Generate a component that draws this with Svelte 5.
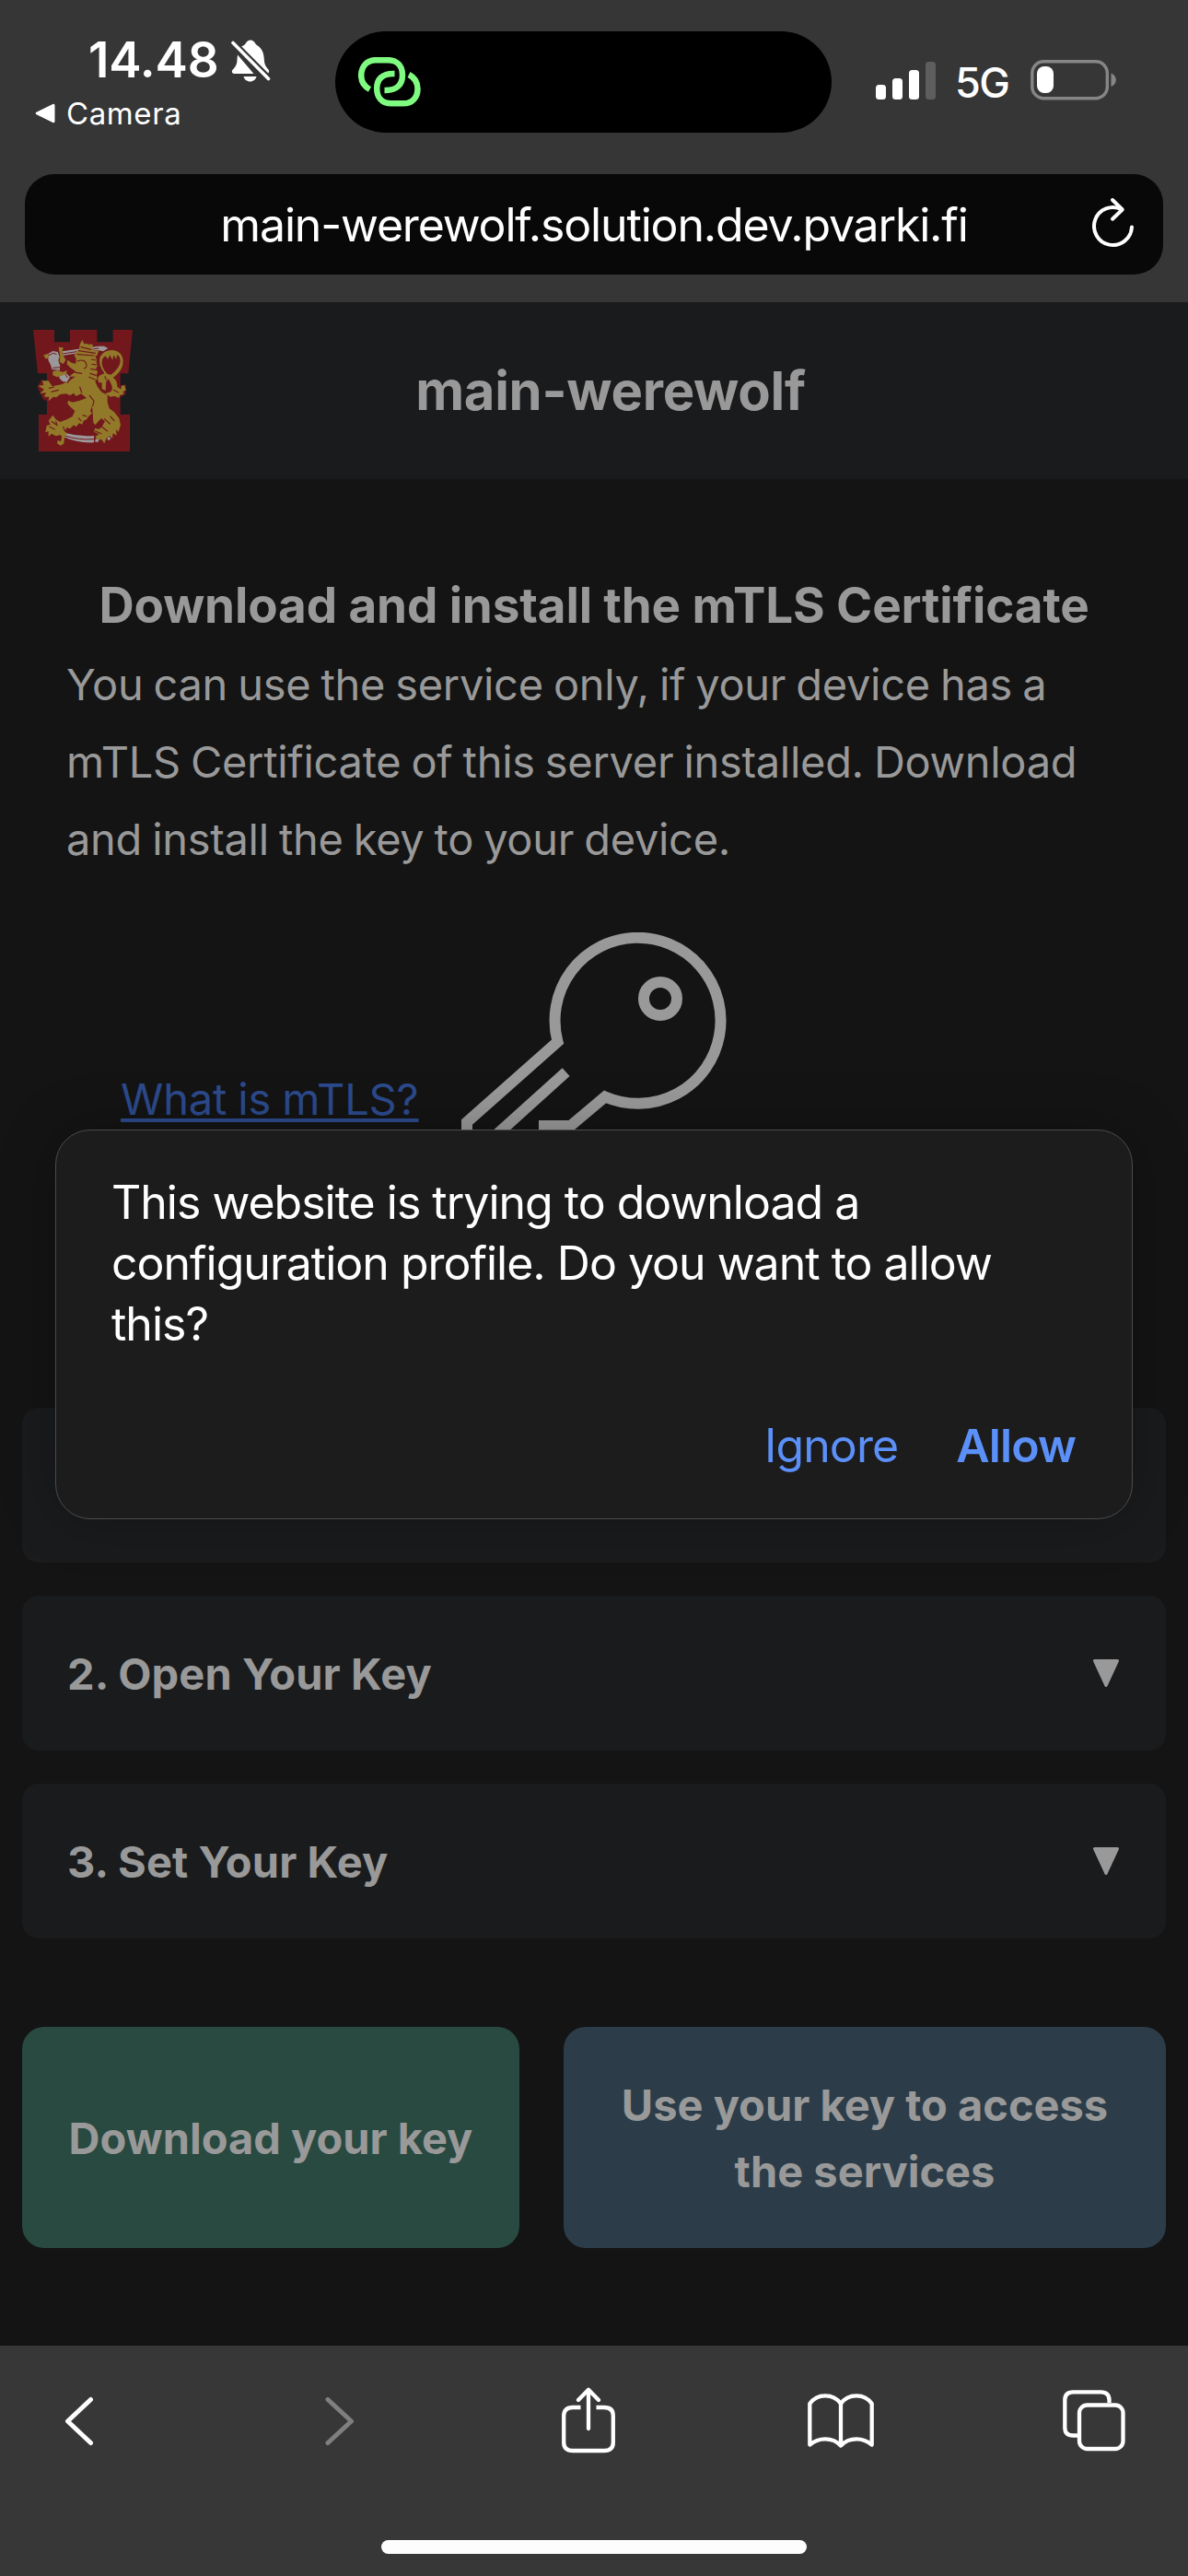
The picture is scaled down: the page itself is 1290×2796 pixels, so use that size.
<script>
  const steps = ['2. Open Your Key', '3. Set Your Key'];
</script>

<div class="screen">
  <header class="chrome">
    <div class="status">
      <div class="status-left">
        <div class="clock">
          <span>14.48</span>
          <svg class="bell" viewBox="0 0 44 48" width="44" height="48">
            <g fill="#fff">
              <path d="M15 7c2-1.200 2.800-5.500 7-5.500s5 4.300 7 5.500c5 3 7.500 8 7.800 15 .2 6 2 8.500 4.700 11.500 1 1.200.8 3-.3 4L12 8.500z" />
              <path d="M8 17.500 25.500 38H4.500C1.800 38 1 35.500 2.800 33.500 6 30 7.500 28 7.500 22z" />
              <path d="M14.500 41h14c-.8 3.200-3.500 5.500-7 5.500s-6.200-2.300-7-5.500z" />
            </g>
            <path d="M3 4.500 41.500 43.500" stroke="#363636" stroke-width="7.500" />
            <path d="M3 4.500 41.500 43.500" stroke="#fff" stroke-width="3.600" stroke-linecap="round" />
          </svg>
        </div>
        <div class="back">
          <svg viewBox="0 0 22 22" width="22" height="22"><path d="M20 2.300v17.400L2.200 11z" fill="#fff" stroke="#fff" stroke-width="3" stroke-linejoin="round" /></svg>
          <span>Camera</span>
        </div>
      </div>
      <div class="island">
        <svg viewBox="0 0 68 54" width="68" height="54" fill="none" stroke="#80fb82" stroke-width="6.500">
          <path d="M12.500 35C6 31.500 3.200 26.500 3.200 20 3.200 10 9.500 3.200 19 3.200h13C42 3.200 48 9.500 48 19.500S42 36 30 36H28.500" />
          <path d="M55 19C62 22.500 64.500 28 64.500 34.500 64.500 44 58.500 50.300 49 50.300H36C26 50.300 20.200 44 20.200 34S26 18 38 18H39.500" />
        </svg>
      </div>
      <div class="status-right">
        <div class="signal"><i class="b1"></i><i class="b2"></i><i class="b3"></i><i class="b4"></i></div>
        <span class="net">5G</span>
        <svg viewBox="0 0 94 44" width="94" height="44">
          <rect x="1.800" y="1.800" width="81.500" height="39.900" rx="12.500" fill="none" stroke="#868686" stroke-width="3.400" />
          <rect x="7" y="7" width="18" height="29" rx="8" fill="#fff" />
          <path d="M87.500 14.500c3.500 1.300 5.300 4 5.300 7.200s-1.800 6-5.300 7.300z" fill="#868686" />
        </svg>
      </div>
    </div>
    <div class="address">
      <span>main-werewolf.solution.dev.pvarki.fi</span>
      <svg class="reload" viewBox="0 0 46 56" width="46" height="56" fill="none" stroke="#fff" stroke-width="4" stroke-linecap="round" stroke-linejoin="round">
        <path d="M32 13.300A20.500 20.500 0 1 0 43 32.500" />
        <path d="M22 3 32.700 13.500 22 23.700" />
      </svg>
    </div>
  </header>

  <div class="brand">
    <svg class="crest" viewBox="48 54 324 396" width="108" height="132">
      <path fill="#72181d" d="M48 54H117V94H168V54H256V94H308V54H372L358 196H332V330H363V450H66V330H93V196H63Z" />
      <path fill="#72181d" d="M62 240 76 215 112 236 104 290 80 280ZM330 236 350 232V262L330 275Z" />
      <g fill="#9b9899">
        <path d="M143 124 262 107 279 107 292 114 276 124 258 120 143 138Z" />
        <path d="M98 131 112 123 128 126 134 142 130 154 136 172 134 188 110 186 105 168 97 152Z" />
        <path d="M132 200 150 190 168 208 158 224 144 222 134 212Z" />
        <path d="M154 390Q200 403 246 399V421Q190 423 148 403ZM252 409 264 412 258 420 249 418ZM290 403 300 404 298 413 290 412Z" />
      </g>
      <path d="M148 398Q196 414 246 410M144 132 262 114M112 178 136 176M108 184 134 187M98 138 112 130 124 133M148 192 160 210" fill="none" stroke="#72181d" stroke-width="3" />
      <g fill="#92792a">
        <path d="M82 136 96 132 100 146 88 148ZM131 110 146 112 142 130 154 152 146 165 134 158 136 140ZM112 190 126 186 146 192 158 186 156 198 140 204 126 208 112 202Z" />
        <path d="M208 86 214 100 224 99 230 103 236 100 243 104 240 114 247 122 262 121 256 138 250 140 256 152 254 160 258 170 253 180 258 192 254 202 257 212 250 222 258 240 270 256 290 268 290 290 296 310 312 322 328 342 333 364 326 386 318 378 320 398 308 391 306 408 298 400 288 404 280 424 270 410 258 412 250 402 262 394 246 386 250 374 262 378 272 370 282 352 270 342 262 350 250 364 244 356 242 324 240 302 234 318 240 326 230 334 222 346 212 350 208 362 198 358 188 370 180 364 168 376 158 372 152 384 158 392 150 406 148 424 138 431 126 424 128 413 138 418 142 402 136 396 122 400 108 392 98 402 98 384 88 388 92 366 104 362 98 350 112 332 122 346 136 354 158 346 176 336 184 318 168 304 160 294 162 284 176 290 200 284 222 276 204 262 188 270 180 260 168 268 156 262 136 264 124 274 114 272 98 286 100 272 84 272 90 258 70 262 84 248 64 236 82 234 78 220 98 220 110 238 140 232 166 220 186 206 166 206 178 196 186 189 170 178 158 166 160 152 174 162 187 164 188 148 182 138 190 124 198 118 200 102Z" />
        <path fill-rule="evenodd" d="M262 226Q254 208 266 202L280 196Q258 166 266 142Q278 120 306 120Q340 124 341 158Q340 182 318 202L308 210Q322 218 322 240L334 248 336 236 345 234 350 250 340 256 344 264 330 266 328 276 314 270 300 272 282 262 300 256Q310 246 302 230L294 214 286 222 284 252 272 246 272 226ZM290 198 302 200Q332 176 332 156 331 138 321 136L319 150 310 136 307 152 297 136 292 149 283 139Q266 152 274 174 278 186 290 198Z" />
      </g>
      <g fill="none" stroke="#72181d" stroke-width="3.500" stroke-linecap="round">
        <path d="M196 122 250 130M192 134 246 138M204 110 236 118M238 150 253 153M240 166 256 168M236 182 254 184M234 196 252 202M230 208 250 216" />
        <path d="M192 156Q214 148 220 162T214 180M172 190 206 196M168 214 160 226M108 256 130 250M100 244 116 240M200 240 206 258M232 268 246 286 242 302M280 344 298 360M300 336 312 350M272 370 290 384M108 352 122 362M102 370 118 378M122 352 126 366M146 370 152 384M210 332 222 336M196 342 204 350M250 384 270 392M282 206 286 216M310 250 326 258" />
      </g>
    </svg>
    <h1>main-werewolf</h1>
  </div>

  <main>
    <h2>Download and install the mTLS Certificate</h2>
    <p class="intro">
      You can use the service only, if your device has a<br />
      mTLS Certificate of this server installed. Download<br />
      and install the key to your device.
    </p>
    <div class="key-row">
      <a href="#mtls">What is mTLS?</a>
      <svg viewBox="0 0 288 288" width="288" height="288" fill="none" stroke="#999" stroke-width="12">
        <path d="M90 282V210H118.500L156 178.500A90 90 0 1 0 104.500 118.700L6 206V282H84" />
        <path d="M113.600 151.600 30 227" />
        <circle cx="216" cy="72" r="18" />
      </svg>
    </div>

    <div class="steps">
      <div class="step"></div>
      {#each steps as step}
        <div class="step">
          <span>{step}</span>
          <svg viewBox="0 0 30 30" width="30" height="30"><path d="M2.500 1.500h25L15 28.500z" fill="#999" stroke="#999" stroke-width="3" stroke-linejoin="round" /></svg>
        </div>
      {/each}
    </div>

    <div class="actions">
      <button class="download">Download your key</button>
      <button class="use">Use your key to access<br />the services</button>
    </div>
  </main>

  <nav>
    <div class="tools">
      <svg class="back-icon" viewBox="0 0 32 54" width="32" height="54"><path d="M28.500 3.500 3.500 27 28.500 50.500" /></svg>
      <svg class="forward-icon" viewBox="0 0 32 54" width="32" height="54"><path d="M3 3.500 28.500 27 3 50.500" /></svg>
      <svg class="share-icon" viewBox="0 0 58 72" width="58" height="72">
        <path d="M20.500 22H12Q2.200 22 2.200 31V60Q2.200 69 12 69H46Q55.800 69 55.800 60V31Q55.800 22 46 22H37.500" stroke-linecap="butt" />
        <path d="M29 45V3M18 14 29 2.800 40 14" />
      </svg>
      <svg class="book-icon" viewBox="0 0 72 60" width="72" height="60">
        <path d="M36 56V11C32 5 26 2.300 19 2.300S6 5.500 2.300 11V55.500C7 51.500 12 49.300 19 49.300S31.500 51.500 36 56.500C40.500 51.500 46 49.300 53 49.300S65 51.500 69.700 55.500V11C66 5.500 60 2.300 53 2.300S40 5 36 11" />
      </svg>
      <svg class="tabs-icon" viewBox="0 0 68 67" width="68" height="67">
        <path d="M50.500 14V11Q50.500 2.300 41.500 2.300H11.300Q2.300 2.300 2.300 11V41Q2.300 49.500 11.300 49.500H16" stroke-linecap="butt" />
        <rect x="18" y="16.500" width="47.500" height="47.500" rx="8.500" />
      </svg>
    </div>
    <div class="home"></div>
  </nav>

  <div class="dialog" role="alertdialog">
    <p>
      This website is trying to download a<br />
      configuration profile. Do you want to allow<br />
      this?
    </p>
    <div class="choices">
      <button>Ignore</button>
      <button class="primary">Allow</button>
    </div>
  </div>
</div>

<style>
  :global(body) { margin: 0; background: #141414; }
  * { box-sizing: border-box; }
  h1, h2, p { margin: 0; }
  svg { display: block; flex: none; }
  button { border: 0; background: none; padding: 0; margin: 0; font: inherit; color: inherit; letter-spacing: inherit; }

  .screen {
    position: relative;
    display: flex;
    flex-direction: column;
    width: 1290px;
    height: 2796px;
    overflow: hidden;
    background: #141414;
    color: #999;
    font-family: Inter, "Noto Sans", sans-serif;
    white-space: nowrap;
  }

  .chrome { height: 328px; background: #363636; color: #fff; }
  .status { display: flex; height: 189px; }
  .status-left { width: 364px; padding-top: 33px; }
  .clock { display: flex; gap: 12px; height: 64px; padding-left: 96px; font-size: 53px; font-weight: 600; line-height: 64px; letter-spacing: -0.100px; }
  .bell { margin-top: 9px; }
  .back { display: flex; align-items: center; gap: 12px; height: 40px; margin-top: 6px; padding-left: 38px; font-size: 33px; font-weight: 400; letter-spacing: 0.600px; }
  .island { width: 539px; height: 110px; margin-top: 34px; padding: 28px 25px; border-radius: 55px; background: #000; }
  .status-right { display: flex; align-items: flex-start; padding: 65px 0 0 48px; }
  .signal { display: flex; align-items: flex-end; gap: 7px; height: 42px; margin-top: 1px; }
  .signal i { width: 11px; border-radius: 3.500px; background: #fff; }
  .signal .b1 { height: 16px; }
  .signal .b2 { height: 23px; }
  .signal .b3 { height: 32px; }
  .signal .b4 { height: 41px; background: #5e5e5e; }
  .net { width: 82px; margin-left: 21px; font-size: 45px; font-weight: 500; line-height: 49px; letter-spacing: -1.500px; }
  .address {
    position: relative;
    height: 109px;
    margin: 0 27px;
    border-radius: 32px;
    background: #080808;
    font-size: 50px;
    line-height: 110px;
    letter-spacing: -1.170px;
    text-align: center;
  }
  .reload { position: absolute; right: 31px; top: 25px; }

  .brand { display: flex; height: 192px; padding: 30px 36px; background: #1a1b1d; }
  h1 { width: 1000px; margin-left: 19px; font-size: 58px; font-weight: 700; line-height: 132px; letter-spacing: -0.300px; text-align: center; }

  main { height: 2026px; padding: 95px 24px 0; }
  h2 { font-size: 53px; font-weight: 700; line-height: 84px; letter-spacing: -0.130px; text-align: center; }
  .intro { margin-top: 2px; padding-left: 48px; font-size: 47px; line-height: 84px; letter-spacing: -0.300px; word-spacing: -1.800px; }
  .key-row { display: flex; gap: 48px; height: 288px; margin-top: 59px; padding-left: 107px; }
  a { width: 322px; margin-top: 151px; color: #2c4a8c; font-size: 47px; line-height: 60px; letter-spacing: -0.160px; word-spacing: -1px; text-decoration-thickness: 4px; text-underline-offset: 4px; text-decoration-skip-ink: none; }
  .steps { display: flex; flex-direction: column; gap: 36px; margin-top: 228px; }
  .step { display: flex; align-items: center; justify-content: space-between; height: 168px; padding: 0 50px 0 49px; border-radius: 18px; background: #1a1b1d; font-size: 47px; font-weight: 700; letter-spacing: 0.100px; }
  .actions { display: flex; gap: 48px; height: 240px; margin-top: 96px; font-size: 47px; font-weight: 700; line-height: 72px; }
  .actions button { padding-top: 1px; border-radius: 24px; }
  .download { width: 540px; background: #294a41; }
  .use { width: 654px; background: #2c3d49; }

  nav { height: 250px; background: #373737; }
  .tools { display: flex; height: 211px; padding: 45px 68px 0 70px; }
  .tools svg { fill: none; stroke: #fff; stroke-width: 4.300px; stroke-linecap: round; stroke-linejoin: round; }
  .tools .back-icon { margin-top: 10px; stroke-width: 5px; }
  .tools .forward-icon { margin: 10px 0 0 251px; stroke: #7f7f7f; stroke-width: 5px; }
  .tools .share-icon { margin-left: 225px; }
  .tools .book-icon { margin: 7px 0 0 209px; }
  .tools .tabs-icon { margin: 3px 0 0 205px; }
  .home { width: 462px; height: 15px; margin: 0 auto; border-radius: 8px; background: #fdfdfd; }

  .dialog {
    position: absolute;
    left: 60px;
    top: 1226px;
    width: 1170px;
    height: 423px;
    padding: 45px 61px 0 60px;
    border: 1px solid #4c4c4c;
    border-radius: 38px;
    background: #1c1c1c;
    box-shadow: 0 0 60px rgba(0, 0, 0, 0.250);
    color: #fff;
    font-size: 50px;
    line-height: 66px;
    letter-spacing: -1px;
  }
  .choices { display: flex; justify-content: flex-end; gap: 63px; margin-top: 66px; color: #5b90f8; letter-spacing: -0.900px; }
  .primary { font-weight: 600; }
</style>
